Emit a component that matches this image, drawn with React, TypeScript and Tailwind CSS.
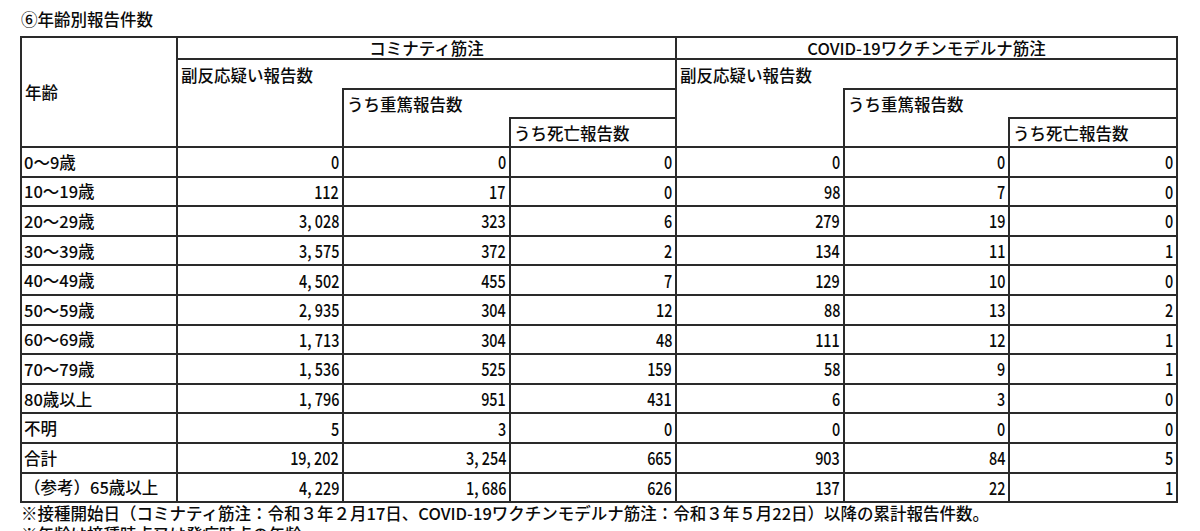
import React from "react";

const rows: string[][] = [
  ["0～9歳", "0", "0", "0", "0", "0", "0"],
  ["10～19歳", "112", "17", "0", "98", "7", "0"],
  ["20～29歳", "3,028", "323", "6", "279", "19", "0"],
  ["30～39歳", "3,575", "372", "2", "134", "11", "1"],
  ["40～49歳", "4,502", "455", "7", "129", "10", "0"],
  ["50～59歳", "2,935", "304", "12", "88", "13", "2"],
  ["60～69歳", "1,713", "304", "48", "111", "12", "1"],
  ["70～79歳", "1,536", "525", "159", "58", "9", "1"],
  ["80歳以上", "1,796", "951", "431", "6", "3", "0"],
  ["不明", "5", "3", "0", "0", "0", "0"],
  ["合計", "19,202", "3,254", "665", "903", "84", "5"],
  ["（参考）65歳以上", "4,229", "1,686", "626", "137", "22", "1"],
];

const B = "border-[#2a2a2a]";

function Num({ v }: { v: string }) {
  return (
    <span className="inline-block origin-right scale-x-[0.8] whitespace-nowrap text-[18px]">
      {v.replace(",", ", ")}
    </span>
  );
}

export default function App() {
  return (
    <div
      className="bg-white text-[#0a0a0a] text-[16.5px] leading-[20px] font-medium"
      style={{ fontFamily: '"Noto Sans CJK JP", "Noto Sans", sans-serif' }}
    >
      <div className="pl-[21px] pt-[9px] h-[36px] text-[16.5px] leading-[20px]">⑥年齢別報告件数</div>
      <table className={`ml-[20px] w-[1156px] table-fixed border-collapse border-2 ${B}`}>
        <colgroup>
          <col className="w-[156px]" />
          <col className="w-[166px]" />
          <col className="w-[167px]" />
          <col className="w-[166px]" />
          <col className="w-[168px]" />
          <col className="w-[165px]" />
          <col className="w-[168px]" />
        </colgroup>
        <tbody>
          <tr className="h-[22px]">
            <td rowSpan={4} className={`border-2 ${B} px-[3px] align-middle`}>年齢</td>
            <td colSpan={3} className={`border-2 ${B} text-center p-0`}>コミナティ筋注</td>
            <td colSpan={3} className={`border-2 ${B} text-center p-0`}>COVID-19ワクチンモデルナ筋注</td>
          </tr>
          <tr className="h-[30px]">
            <td className={`border-l-2 ${B} px-[3px] whitespace-nowrap`}>副反応疑い報告数</td>
            <td colSpan={2} className={`border-b-2 border-r-2 ${B}`}></td>
            <td className={`border-l-2 ${B} px-[3px] whitespace-nowrap`}>副反応疑い報告数</td>
            <td colSpan={2} className={`border-b-2 border-r-2 ${B}`}></td>
          </tr>
          <tr className="h-[29px]">
            <td className={`border-l-2 ${B}`}></td>
            <td className={`border-l-2 ${B} px-[3px] whitespace-nowrap`}>うち重篤報告数</td>
            <td className={`border-b-2 border-r-2 ${B}`}></td>
            <td className={`border-l-2 ${B}`}></td>
            <td className={`border-l-2 ${B} px-[3px] whitespace-nowrap`}>うち重篤報告数</td>
            <td className={`border-b-2 border-r-2 ${B}`}></td>
          </tr>
          <tr className="h-[29px]">
            <td className={`border-l-2 border-b-2 ${B}`}></td>
            <td className={`border-l-2 border-b-2 ${B}`}></td>
            <td className={`border-2 ${B} px-[3px] whitespace-nowrap`}>うち死亡報告数</td>
            <td className={`border-l-2 border-b-2 ${B}`}></td>
            <td className={`border-l-2 border-b-2 ${B}`}></td>
            <td className={`border-2 ${B} px-[3px] whitespace-nowrap`}>うち死亡報告数</td>
          </tr>
          {rows.map((r) => (
            <tr key={r[0]} className="h-[29.6px]">
              <td className={`border-2 ${B} px-[2px] whitespace-nowrap`}>{r[0]}</td>
              {r.slice(1).map((v, i) => (
                <td key={i} className={`border-2 ${B} text-right pr-[3px] pl-0 leading-[20px]`}>
                  <Num v={v} />
                </td>
              ))}
            </tr>
          ))}
        </tbody>
      </table>
      <div className="pl-[21px] leading-[21px] whitespace-nowrap">
        ※接種開始日（コミナティ筋注：令和３年２月17日、COVID-19ワクチンモデルナ筋注：令和３年５月22日）以降の累計報告件数。
      </div>
      <div className="pl-[21px] leading-[21px] whitespace-nowrap">※年齢は接種時点又は発症時点の年齢</div>
    </div>
  );
}
